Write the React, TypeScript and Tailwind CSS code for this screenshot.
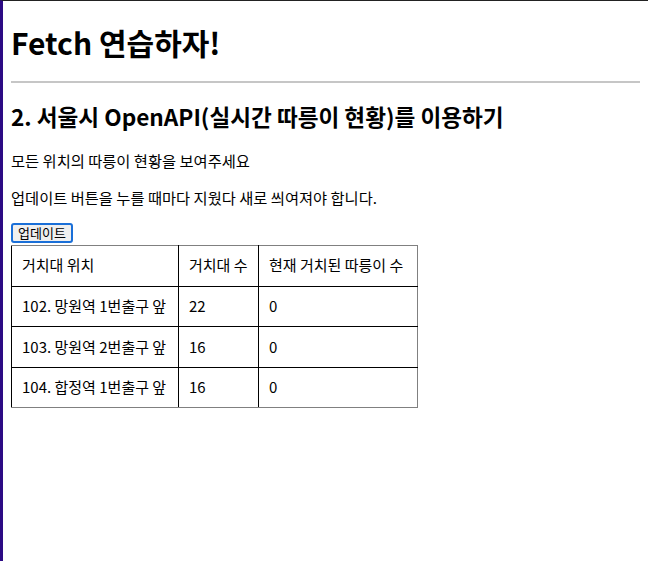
import React from 'react';

const rows = [
  { name: '102. 망원역 1번출구 앞', racks: 22, parked: 0 },
  { name: '103. 망원역 2번출구 앞', racks: 16, parked: 0 },
  { name: '104. 합정역 1번출구 앞', racks: 16, parked: 0 },
];

export default function App() {
  return (
    <div
      className="min-h-[561px] border-l-[3px] border-l-[#2c0a84] border-t border-t-[#222] bg-white text-black text-[15px]"
      style={{ fontFamily: '"Noto Sans CJK KR", "Noto Sans", sans-serif' }}
    >
      <div className="px-[8px] pb-8">
        <h1 className="mt-[21px] text-[30px] font-bold leading-[40px]">Fetch 연습하자!</h1>
        <hr className="mt-[19px] h-[2px] border-0 bg-[#c6c6c6]" />
        <h2 className="mt-[18px] text-[22.6px] font-bold leading-[32px]">
          2. 서울시 OpenAPI(실시간 따릉이 현황)를 이용하기
        </h2>
        <p className="mt-[15px] text-[15.3px] leading-[24px]">모든 위치의 따릉이 현황을 보여주세요</p>
        <p className="mt-[13px] text-[15.3px] leading-[24px]">업데이트 버튼을 누를 때마다 지웠다 새로 씌여져야 합니다.</p>

        <button className="mt-[14px] h-[20px] px-[5px] rounded-[3px] border-2 border-[#1a6fd8] bg-[#efefef] text-[13px] leading-[16px]">
          업데이트
        </button>

        {/* Station table */}
        <table className="mt-[1px] border-collapse">
          <thead>
            <tr className="h-[41px]">
              <th className="w-[167px] border border-black border-t-[#808080] px-[10px] text-left font-normal">거치대 위치</th>
              <th className="w-[80px] border border-black border-t-[#808080] px-[10px] text-left font-normal">거치대 수</th>
              <th className="w-[159px] border border-black border-t-[#808080] border-r-[#808080] px-[10px] text-left font-normal">현재 거치된 따릉이 수</th>
            </tr>
          </thead>
          <tbody>
            {rows.map((r, i) => {
              const last = i === rows.length - 1;
              return (
                <tr key={r.name} className="h-[40.5px]">
                  <td className={`border border-black px-[10px] ${last ? 'border-b-[#808080]' : ''}`}>{r.name}</td>
                  <td className={`border border-black px-[10px] ${last ? 'border-b-[#808080]' : ''}`}>{r.racks}</td>
                  <td className={`border border-black border-r-[#808080] px-[10px] ${last ? 'border-b-[#808080]' : ''}`}>{r.parked}</td>
                </tr>
              );
            })}
          </tbody>
        </table>
      </div>
    </div>
  );
}
